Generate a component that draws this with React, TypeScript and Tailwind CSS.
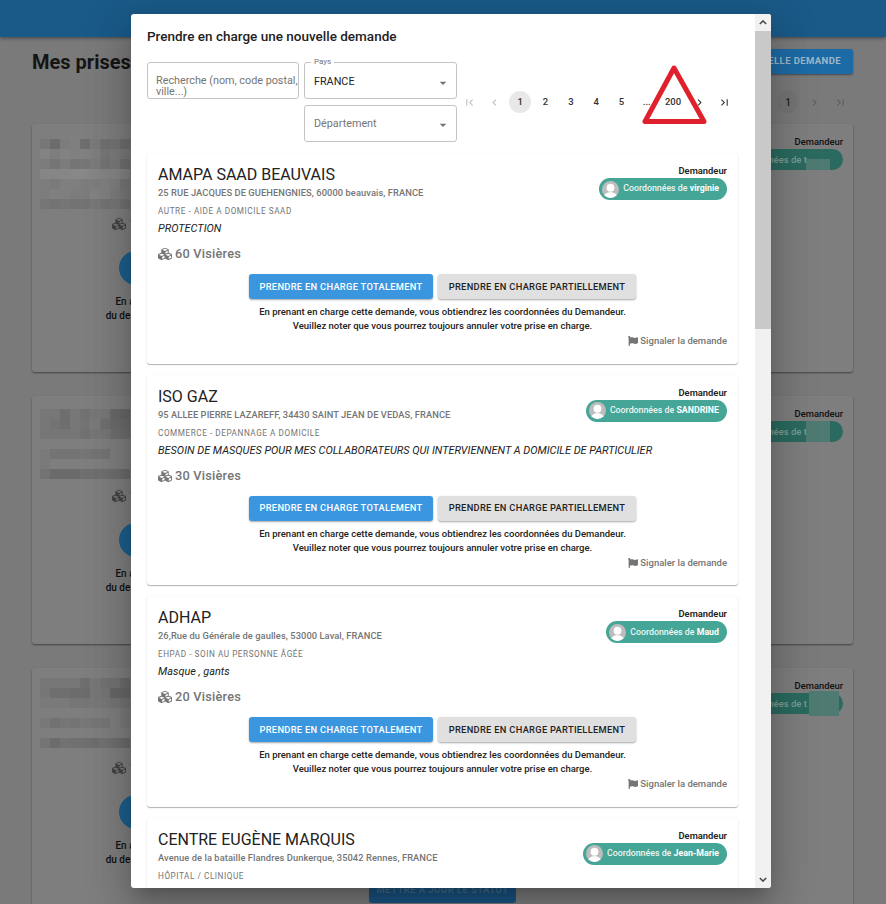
import { FaCubes, FaFlag } from "react-icons/fa";

const D = "#6f6f6f";
const M = "#777777";
const L = "#7e7e7e";

const mosaics: string[][] = [
  [
    "#777","#6c6c6c","#7c7c7c","#7f7f7f","#6e6e6e","#7a7a7a","#717171","#757575","#6f6f6f",
    "#838383","#7e7e7e","#828282","#808080","#818181","#7e7e7e","#777777","#7c7c7c","#7a7a7a",
    "#7b7b7b","#757575","#7c7c7c","#757575","#777777","#7b7b7b","#747474","#7a7a7a","#707070",
    "#868686","#868686","#868686","#888888","#888888","#868686","#858585","#868686","#848484",
    "#7d7d7d","#7a7a7a","#7f7f7f","#7f7f7f","#7d7d7d","#7d7d7d","#808080","#7f7f7f","#787878",
    "#7c7c7c","#808080","#7f7f7f","#7c7c7c","#7c7c7c","#828282","#808080","#7d7d7d","#7a7a7a",
    "#767676","#737373","#767676","#737373","#737373","#787878","#747474","#777777","#727272",
  ],
  [
    M,M,"#6e6e6e",M,"#727272",M,M,"#6a6a6a","#686868",
    M,"#737373","#6f6f6f",M,"#747474","#7a7a7a","#707070","#6c6c6c","#6c6c6c",
    "#767676","#767676","#767676","#767676","#717171","#767676","#767676","#6f6f6f","#6f6f6f",
    L,L,L,L,L,L,L,L,L,
    "#7a7a7a","#747474","#747474","#747474","#767676","#747474","#747474",L,L,
    "#7a7a7a",L,L,L,L,L,L,L,L,
    "#737373","#6b6b6b","#6b6b6b","#6b6b6b","#6f6f6f","#6f6f6f","#707070","#6e6e6e","#6c6c6c",
  ],
  [
    M,M,M,M,"#6f6f6f",M,"#737373","#737373","#6c6c6c",
    "#767676",D,D,"#6c6c6c","#6c6c6c",M,"#767676","#686868","#686868",
    "#7a7a7a","#7a7a7a","#7a7a7a","#767676","#767676","#787878","#787878","#767676","#747474",
    L,L,L,L,L,L,L,L,"#7a7a7a",
    "#787878","#727272","#767676","#747474","#787878","#767676","#767676",L,"#7a7a7a",
    L,L,L,L,L,L,L,L,L,
    "#757575","#6c6c6c","#727272","#707070","#707070","#6e6e6e","#727272","#6f6f6f","#6c6c6c",
  ],
];

function Mosaic({ tones, className }: { tones: string[]; className: string }) {
  return (
    <div className={`absolute left-[8px] grid grid-cols-9 w-[90px] ${className}`}>
      {tones.map((c, i) => (
        <div key={i} className="h-[10px]" style={{ backgroundColor: c }} />
      ))}
    </div>
  );
}

function BackgroundCard({
  tones,
  mosaicTop,
  rightPad,
  patch,
}: {
  tones: string[];
  mosaicTop: string;
  rightPad: string;
  patch: string;
}) {
  return (
    <div className="relative h-[248px] rounded-[3px] bg-[#7e7e7e] shadow-[0_1px_2px_rgba(0,0,0,0.45)] pr-[10px] flex justify-between">
      <Mosaic tones={tones} className={mosaicTop} />
      <div className="w-[210px] flex flex-col items-center pt-[93px] text-[10px] leading-[13.5px] text-[#111] font-medium text-center">
        <div className="flex items-center gap-1 pr-[26px] text-[#444] text-[12px] leading-[14px] font-bold whitespace-nowrap">
          <FaCubes className="w-[14px] h-[14px]" />
          <span>1</span>
        </div>
        <div className="mt-[20px] mr-[2px] w-[34px] h-[34px] rounded-full bg-[#1c5f8c] shrink-0" />
        <div className="mt-[10px] pr-[24px] whitespace-nowrap">En a</div>
        <div className="pr-[38px] whitespace-nowrap">du de</div>
      </div>
      <div className={`flex flex-col items-end text-[9.4px] font-medium text-[#111] leading-[12px] ${rightPad}`}>
        <div>Demandeur</div>
        <div className="relative mt-[1px] w-[120px] h-[21px] rounded-full bg-[#2b6a5f] text-[#7d9d96] text-[9.5px] leading-[21px] pr-[36px] text-right whitespace-nowrap">
          nnées de t
          <span className={`absolute ${patch} bg-[#4f7a72]`} />
        </div>
      </div>
    </div>
  );
}

function Pager({ d, disabled, className = "" }: { d: string; disabled?: boolean; className?: string }) {
  return (
    <span className={`w-[25.3px] flex justify-center ${disabled ? "text-[#bdbdbd]" : "text-[#333]"} ${className}`}>
      <svg viewBox="0 0 24 24" className="w-[13px] h-[13px]" fill="currentColor">
        <path d={d} />
      </svg>
    </span>
  );
}

const FIRST = "M18.41 16.59L13.82 12l4.59-4.59L17 6l-6 6 6 6zM6 6h2v12H6z";
const LAST = "M5.59 7.41L10.18 12l-4.59 4.59L7 18l6-6-6-6zM16 6h2v12h-2z";
const PREV = "M15.41 7.41L14 6l-6 6 6 6 1.41-1.41L10.83 12z";
const NEXT = "M10 6L8.59 7.41 13.17 12l-4.58 4.59L10 18l6-6z";

function Avatar() {
  return (
    <span className="w-[17px] h-[17px] rounded-full bg-[#bdbdbd] overflow-hidden shrink-0">
      <svg viewBox="0 0 24 24" className="w-full h-full" fill="#fff">
        <circle cx="12" cy="9.5" r="5.5" />
        <path d="M2 26c0-7 4.5-10 10-10s10 3 10 10z" />
      </svg>
    </span>
  );
}

type Req = {
  name: string;
  address: string;
  category: string;
  desc?: string;
  qty?: string;
  contact: string;
};

const requests: Req[] = [
  {
    name: "AMAPA SAAD BEAUVAIS",
    address: "25 RUE JACQUES DE GUEHENGNIES, 60000 beauvais, FRANCE",
    category: "AUTRE - AIDE A DOMICILE SAAD",
    desc: "PROTECTION",
    qty: "60 Visières",
    contact: "virginie",
  },
  {
    name: "ISO GAZ",
    address: "95 ALLEE PIERRE LAZAREFF, 34430 SAINT JEAN DE VEDAS, FRANCE",
    category: "COMMERCE - DEPANNAGE A DOMICILE",
    desc: "BESOIN DE MASQUES POUR MES COLLABORATEURS QUI INTERVIENNENT A DOMICILE DE PARTICULIER",
    qty: "30 Visières",
    contact: "SANDRINE",
  },
  {
    name: "ADHAP",
    address: "26,Rue du Générale de gaulles, 53000 Laval, FRANCE",
    category: "EHPAD - SOIN AU PERSONNE ÂGÉE",
    desc: "Masque , gants",
    qty: "20 Visières",
    contact: "Maud",
  },
  {
    name: "CENTRE EUGÈNE MARQUIS",
    address: "Avenue de la bataille Flandres Dunkerque, 35042 Rennes, FRANCE",
    category: "HÔPITAL / CLINIQUE",
    contact: "Jean-Marie",
  },
];

function RequestCard({ r }: { r: Req }) {
  return (
    <div className="relative rounded-[3px] bg-white shadow-[0_1px_1px_rgba(0,0,0,0.3),0_0_3px_rgba(0,0,0,0.04)] px-[11px] pt-[12px] pb-[15.67px] shrink-0">
      <div className="flex justify-between items-start">
        <div>
          <div className="text-[16px] leading-[20px] text-[#222]">{r.name}</div>
          <div className="mt-[2px] text-[9.3px] leading-[12px] font-medium tracking-[0.08px] text-[#757575]">{r.address}</div>
          <div className="mt-[7px] text-[8.2px] leading-[11px] tracking-[0.55px] text-[#757575]">{r.category}</div>
        </div>
        <div className="flex flex-col items-end">
          <div className="text-[9.4px] leading-[12px] font-semibold text-[#222]">Demandeur</div>
          <div className="mt-[1px] h-[22px] rounded-full bg-[#45a596] flex items-center pl-[3px] pr-[8px] gap-[4px] text-white text-[8.8px] font-medium whitespace-nowrap">
            <Avatar />
            <span>
              <span className="opacity-90">Coordonnées de </span>
              <span className="font-bold">{r.contact}</span>
            </span>
          </div>
        </div>
      </div>
      {r.desc && (
        <>
          <div className="mt-[5px] text-[10.9px] leading-[14px] italic text-[#222]">{r.desc}</div>
          <div className="mt-[10px] flex items-center gap-[3px] text-[#757575] text-[12.8px] leading-[16px] font-medium tracking-[0.2px]">
            <FaCubes className="w-[14px] h-[14px]" />
            <span>{r.qty}</span>
          </div>
          <div className="mt-[12px] flex justify-center gap-[5px]">
            <button className="w-[184px] h-[25px] rounded-[3px] bg-[#3b96e0] text-white text-[9.3px] font-medium tracking-[0.3px] shadow-[0_1px_2px_rgba(0,0,0,0.35)]">
              PRENDRE EN CHARGE TOTALEMENT
            </button>
            <button className="w-[198px] h-[25px] rounded-[3px] bg-[#e0e0e0] text-[#222] text-[9.3px] font-medium tracking-[0.3px] shadow-[0_1px_2px_rgba(0,0,0,0.35)]">
              PRENDRE EN CHARGE PARTIELLEMENT
            </button>
          </div>
          <div className="mt-[6px] text-center text-[9.5px] leading-[14px] font-medium text-[#222]">
            <div>En prenant en charge cette demande, vous obtiendrez les coordonnées du Demandeur.</div>
            <div>Veuillez noter que vous pourrez toujours annuler votre prise en charge.</div>
          </div>
          <div className="mt-[1px] flex justify-end items-center gap-[2px] text-[9.5px] leading-[14px] font-medium text-[#757575]">
            <FaFlag className="w-[10px] h-[10px]" />
            <span>Signaler la demande</span>
          </div>
        </>
      )}
    </div>
  );
}

function Field({ label, value, muted }: { label?: string; value: string; muted?: boolean }) {
  return (
    <div className={`relative h-[37px] w-[153px] rounded-[3px] border border-[#c4c4c4] flex items-center pl-[9px] pr-[5px] justify-between ${label ? "pt-[4px]" : "pt-[2px]"}`}>
      {label && (
        <span className="absolute -top-[6px] left-[6px] bg-white px-[3px] text-[8px] leading-[10px] text-[#757575]">{label}</span>
      )}
      <span className={`text-[10.8px] ${muted ? "text-[#757575]" : "text-[#222]"}`}>{value}</span>
      <svg viewBox="0 0 24 24" className="w-[16px] h-[16px] text-[#757575]" fill="currentColor">
        <path d="M7 10l5 5 5-5z" />
      </svg>
    </div>
  );
}

export default function App() {
  return (
    <div className="relative h-[904px] w-[886px] overflow-hidden bg-[#7a7a7a] font-['Roboto',sans-serif]">
      {/* page behind the dialog, already dimmed */}
      <header className="h-[37px] bg-[#1a5a88] shadow-[0_1px_4px_rgba(0,0,0,0.45)]" />
      <main className="px-[32px] pr-[33px]">
        <div className="mt-[12px] flex justify-between items-center h-[25px]">
          <h1 className="text-[20px] font-bold text-[#151515] whitespace-nowrap">Mes prises en charge</h1>
          <button className="h-[25px] rounded-[3px] px-[12px] bg-[#1d6ba6] text-[#9fb8c9] text-[9.5px] font-bold tracking-[0.4px] shadow-[0_1px_2px_rgba(0,0,0,0.4)]">
            NOUVELLE DEMANDE
          </button>
        </div>
        <div className="mt-[17px] h-[22px] flex justify-end items-center text-[10px] text-[#1f1f1f] font-medium">
          <span className="w-[22px] h-[22px] mx-[2px] rounded-full bg-[#757575] flex items-center justify-center">1</span>
          <span className="w-[26px] flex justify-center text-[#5e5e5e]">
            <svg viewBox="0 0 24 24" className="w-[13px] h-[13px]" fill="currentColor"><path d={NEXT} /></svg>
          </span>
          <span className="w-[26px] flex justify-center text-[#5e5e5e]">
            <svg viewBox="0 0 24 24" className="w-[13px] h-[13px]" fill="currentColor"><path d={LAST} /></svg>
          </span>
        </div>
        <div className="mt-[11px] flex flex-col gap-[24px]">
          <BackgroundCard tones={mosaics[0]} mosaicTop="top-[15px]" rightPad="pt-[12px]" patch="right-[13px] top-[10px] w-[24px] h-[11px]" />
          <BackgroundCard tones={mosaics[1]} mosaicTop="top-[13px]" rightPad="pt-[12px]" patch="right-[13px] top-0 w-[24px] h-[21px]" />
          <BackgroundCard tones={mosaics[2]} mosaicTop="top-[10px]" rightPad="pt-[12px]" patch="right-[4px] -top-[2px] w-[30px] h-[25px]" />
        </div>
      </main>

      {/* button that sticks out below the dialog */}
      <button className="absolute left-[369px] top-[878px] w-[147px] h-[25px] rounded-[3px] bg-[#1a5585] text-[#42708f] text-[9.5px] font-bold tracking-[0.4px]">
        METTRE A JOUR LE STATUT
      </button>

      {/* dialog */}
      <div className="absolute left-[131px] top-[14px] w-[640px] h-[874px] bg-white rounded-[3px] shadow-[0_11px_15px_-7px_rgba(0,0,0,0.2),0_24px_38px_3px_rgba(0,0,0,0.14),0_9px_46px_8px_rgba(0,0,0,0.12)] flex overflow-hidden">
        <div className="flex-1 min-w-0 px-[16px] pt-[14px] overflow-hidden">
          <h2 className="text-[13.5px] leading-[17px] font-medium text-[#222]">Prendre en charge une nouvelle demande</h2>
          <div className="mt-[17px] flex">
            <div className="h-[37px] w-[152px] rounded-[3px] border border-[#c4c4c4] pl-[8px] pt-[12px] text-[10.8px] leading-[11px] text-[#757575] overflow-hidden shrink-0">
              Recherche (nom, code postal, ville...)
            </div>
            <div className="ml-[5px] flex flex-col gap-[6px] shrink-0">
              <Field label="Pays" value="FRANCE" />
              <Field value="Département" muted />
            </div>
            <div className="flex items-center h-[80px] text-[9.5px] font-medium text-[#333]">
              <Pager d={FIRST} disabled />
              <Pager d={PREV} disabled />
              <span className="w-[25.3px] flex justify-center">
                <span className="w-[22px] h-[22px] rounded-full bg-[#e8e8e8] flex items-center justify-center">1</span>
              </span>
              {["2", "3", "4", "5", "..."].map((p) => (
                <span key={p} className="w-[25.3px] text-center">{p}</span>
              ))}
              <span className="ml-[1px] w-[25.3px] text-center">200</span>
              <Pager d={NEXT} className="ml-[1px]" />
              <Pager d={LAST} />
            </div>
          </div>
          <div className="mt-[11px] flex flex-col gap-[11px] w-[591px]">
            {requests.map((r) => (
              <RequestCard key={r.name} r={r} />
            ))}
          </div>
        </div>
        <div className="w-[16px] shrink-0 bg-[#f1f1f1] flex flex-col">
          <div className="h-[17px] bg-[#f1f1f1] flex items-center justify-center text-[#444]">
            <svg viewBox="0 0 10 6" className="w-[8px] h-[5px]" fill="none" stroke="currentColor" strokeWidth="1.8">
              <path d="M1 5l4-4 4 4" />
            </svg>
          </div>
          <div className="h-[298px] bg-[#c9c9c9]" />
          <div className="flex-1" />
          <div className="h-[17px] flex items-center justify-center text-[#444]">
            <svg viewBox="0 0 10 6" className="w-[8px] h-[5px]" fill="none" stroke="currentColor" strokeWidth="1.8">
              <path d="M1 1l4 4 4-4" />
            </svg>
          </div>
        </div>
      </div>

      {/* red warning triangle annotation on top of the screenshot */}
      <svg className="absolute left-[640px] top-[62px]" width="70" height="66" viewBox="0 0 70 66" fill="none">
        <path d="M34 6L5 59.5h59z" stroke="#e0202c" strokeWidth="5" strokeLinejoin="round" />
      </svg>
    </div>
  );
}
